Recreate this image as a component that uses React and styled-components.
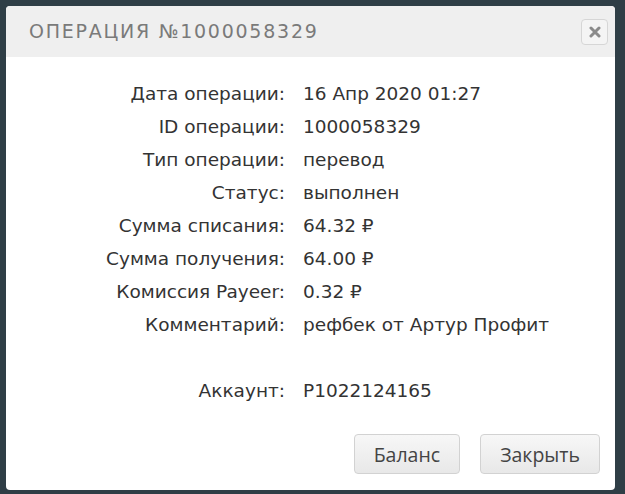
import React from 'react'
import styled, { createGlobalStyle } from 'styled-components'

const GlobalStyle = createGlobalStyle`
  html, body {
    margin: 0;
    padding: 0;
    background: #2f3e46;
  }
`

const rows = [
  ['Дата операции:', '16 Апр 2020 01:27'],
  ['ID операции:', '1000058329'],
  ['Тип операции:', 'перевод'],
  ['Статус:', 'выполнен'],
  ['Сумма списания:', '64.32 ₽'],
  ['Сумма получения:', '64.00 ₽'],
  ['Комиссия Payeer:', '0.32 ₽'],
  ['Комментарий:', 'рефбек от Артур Профит'],
]

const App = () => (
  <Page>
    <GlobalStyle />
    <Dialog>
      <Header>
        <Title>Операция №1000058329</Title>
        <CloseButton aria-label="close">
          <svg width="12" height="12" viewBox="0 0 12 12">
            <path d="M2 2 L10 10 M10 2 L2 10" stroke="#8a8a8a" strokeWidth="3" strokeLinecap="round" />
          </svg>
        </CloseButton>
      </Header>
      <Body>
        <Details>
          {rows.map(([label, value]) => (
            <React.Fragment key={label}>
              <Label>{label}</Label>
              <Value>{value}</Value>
            </React.Fragment>
          ))}
          <Spacer />
          <Label>Аккаунт:</Label>
          <Value>P1022124165</Value>
        </Details>
      </Body>
      <Footer>
        <Button>Баланс</Button>
        <Button>Закрыть</Button>
      </Footer>
    </Dialog>
  </Page>
)

const Page = styled.div`
  width: 625px;
  height: 494px;
  padding: 6px 10px 4px 6px;
  box-sizing: border-box;
`

const Dialog = styled.div`
  width: 609px;
  height: 484px;
  background: #fff;
  border-radius: 4px;
  overflow: hidden;
  display: flex;
  flex-direction: column;
`

const Header = styled.div`
  height: 51px;
  background: #efefef;
  display: flex;
  align-items: center;
  justify-content: space-between;
  padding: 0 7px 0 23px;
  box-sizing: border-box;
`

const Title = styled.h3`
  margin: 0 0 1px;
  font-family: "DejaVu Sans", sans-serif;
  font-weight: 400;
  font-size: 19px;
  letter-spacing: 1.75px;
  text-transform: uppercase;
  color: #7a7a7a;
`

const CloseButton = styled.button`
  width: 27px;
  height: 26px;
  padding: 0;
  display: flex;
  align-items: center;
  justify-content: center;
  background: #f4f4f4;
  border: 1px solid #d6d6d6;
  border-radius: 4px;
`

const Body = styled.div`
  flex: 1;
  padding-top: 20px;
`

const Details = styled.div`
  display: grid;
  grid-template-columns: 279px 1fr;
  column-gap: 18px;
  grid-auto-rows: 33px;
  font-family: "DejaVu Sans", sans-serif;
  font-size: 18.5px;
  color: #333;
  align-items: center;
`

const Label = styled.div`
  text-align: right;
`

const Value = styled.div`
  text-align: left;
`

const Spacer = styled.div`
  grid-column: 1 / -1;
`

const Footer = styled.div`
  display: flex;
  justify-content: flex-end;
  gap: 20px;
  padding: 0 15px 16px 0;
`

const Button = styled.button`
  height: 40px;
  padding: 0 19px;
  font-family: "Open Sans", sans-serif;
  font-size: 19.5px;
  color: #444;
  background: linear-gradient(#f7f7f7, #e8e8e8);
  border: 1px solid #d2d2d2;
  border-radius: 4px;
`

export default App
